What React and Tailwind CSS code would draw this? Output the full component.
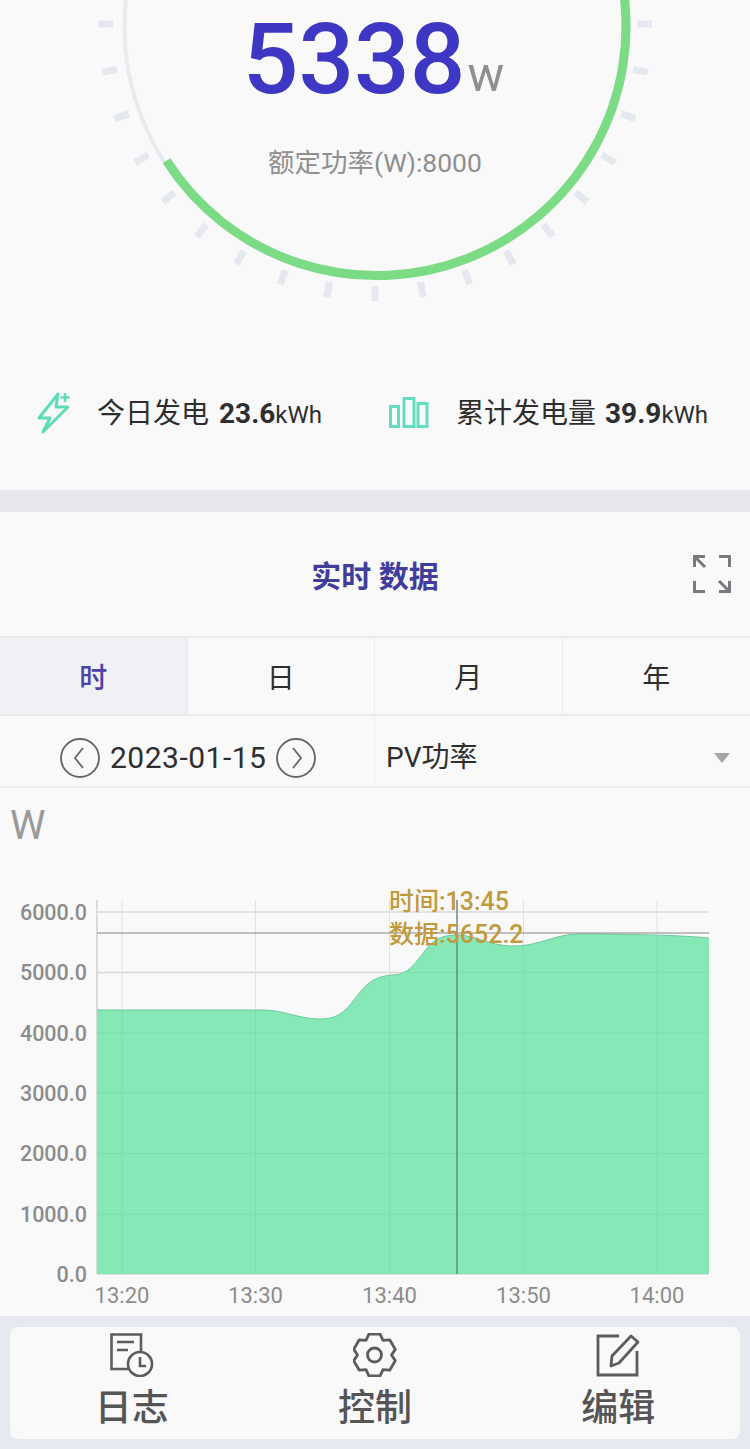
import React from 'react';

const ticks = Array.from({ length: 19 }, (_, i) => i * 10);
const yLabels = [
  ['6000.0', 912],
  ['5000.0', 972.5],
  ['4000.0', 1033],
  ['3000.0', 1093],
  ['2000.0', 1153.5],
  ['1000.0', 1214],
  ['0.0', 1274],
];
const xLabels = [
  ['13:20', 122],
  ['13:30', 255.5],
  ['13:40', 389.5],
  ['13:50', 523.5],
  ['14:00', 657],
];
const curve =
  'M97 1010 L262 1010 C285 1010 298 1019 320 1019 C345 1019 350 1003 362 990 C372 978 382 976 392 975 C412 975 418 957 430 945 C438 937 446 935 457 935 C475 935 488 945 510 946 C540 947 552 934 580 934 C620 934 680 935 709 938';
const areaPath = curve + ' L709 1274 L97 1274 Z';

const gearPath = (() => {
  const cx = 21.5;
  const cy = 22;
  const steps = [
    [-30, 17],
    [-15, 21.5],
    [15, 21.5],
  ];
  let d = '';
  for (let t = 0; t < 6; t++) {
    steps.forEach(([a, r]) => {
      const rad = ((t * 60 + a - 90) * Math.PI) / 180;
      const x = (cx + r * Math.cos(rad)).toFixed(1);
      const y = (cy + r * Math.sin(rad)).toFixed(1);
      d += `${d ? 'L' : 'M'}${x} ${y} `;
    });
  }
  return d + 'Z';
})();

const Gauge = () => (
  <svg className="absolute left-0 top-0" width="750" height="370" viewBox="0 0 750 370">
    {ticks.map((a) => (
      <line
        key={a}
        x1={375 + 262 * Math.cos((a * Math.PI) / 180)}
        y1={24 + 262 * Math.sin((a * Math.PI) / 180)}
        x2={375 + 277 * Math.cos((a * Math.PI) / 180)}
        y2={24 + 277 * Math.sin((a * Math.PI) / 180)}
        stroke="#e5e8ee"
        strokeWidth="7"
      />
    ))}
    <circle cx="376.5" cy="26" r="252" fill="none" stroke="#e9ebef" strokeWidth="4" />
    <path d="M166.5 160.8 A249.5 249.5 0 0 0 622.2 -17.3" fill="none" stroke="#7bdc85" strokeWidth="9" />
  </svg>
);

const BoltIcon = () => (
  <svg width="36" height="46" viewBox="0 0 36 46" fill="none" stroke="#5ddcb8" strokeWidth="3">
    <path d="M22 4 L3 28 L14 28 L7 42 L32 17 L20 17 Z" strokeLinejoin="round" />
    <path d="M29 3 V12 M24.5 7.5 H33.5" strokeWidth="2.5" />
  </svg>
);

const BarsIcon = () => (
  <svg width="40" height="31" viewBox="0 0 40 31" fill="none" stroke="#63dcc0" strokeWidth="3">
    <rect x="1.5" y="9.5" width="8" height="20" />
    <rect x="15" y="1.5" width="10" height="28" />
    <rect x="29" y="6.5" width="9" height="23" />
  </svg>
);

const ExpandIcon = () => (
  <svg width="38" height="38" viewBox="0 0 38 38" fill="none" stroke="#77797d" strokeWidth="3">
    <path d="M1.5 12 V1.5 H12" />
    <path d="M2 2 L12 12" />
    <path d="M26 1.5 H36.5 V12" />
    <path d="M1.5 26 V36.5 H12" />
    <path d="M26 36.5 H36.5 V26" />
    <path d="M36 36 L26 26" />
  </svg>
);

const RoundArrow = ({ dir }) => (
  <svg width="40" height="40" viewBox="0 0 40 40" fill="none" stroke="#666" strokeWidth="1.8">
    <circle cx="20" cy="20" r="19" />
    <path d={dir === 'left' ? 'M23 10 L15 20 L23 30' : 'M17 10 L25 20 L17 30'} />
  </svg>
);

const LogIcon = () => (
  <svg width="44" height="44" viewBox="0 0 44 44" fill="none" stroke="#5c5c5c" strokeWidth="2.6">
    <path d="M18 36 H1.5 V1.5 H31 V18" />
    <path d="M7 9 H24 M7 17 H18" />
    <circle cx="30" cy="31" r="12" />
    <path d="M30 24 V33 H36" />
  </svg>
);

const GearIcon = () => (
  <svg width="44" height="44" viewBox="0 0 44 44" fill="none" stroke="#5c5c5c" strokeWidth="2.8">
    <path d={gearPath} strokeLinejoin="round" />
    <circle cx="21.5" cy="22" r="7" />
  </svg>
);

const EditIcon = () => (
  <svg width="44" height="44" viewBox="0 0 44 44" fill="none" stroke="#5c5c5c" strokeWidth="2.8">
    <path d="M23 3 H2 V42 H41 V18" />
    <path d="M15 33 L16 23 L35 3 L42 9 L23 30 Z" strokeLinejoin="round" />
  </svg>
);

const Chart = () => (
  <svg width="750" height="436" viewBox="0 880 750 436">
    <defs>
      <clipPath id="areaClip">
        <path d={areaPath} />
      </clipPath>
    </defs>
    {yLabels.map(([label, y]) => (
      <line key={label} x1="97" x2="709" y1={y} y2={y} stroke="#d8d8d8" strokeWidth="1.5" />
    ))}
    {xLabels.map(([label, x]) => (
      <line key={label} x1={x} x2={x} y1="900" y2="1274" stroke="#e2e2e2" strokeWidth="1" />
    ))}
    <line x1="97" x2="97" y1="900" y2="1274" stroke="#d0d0d0" strokeWidth="1.5" />
    <path d={areaPath} fill="#86e9b5" />
    <path d={curve} fill="none" stroke="#6fc9a0" strokeWidth="1" />
    <g clipPath="url(#areaClip)">
      {yLabels.map(([label, y]) => (
        <line key={label} x1="97" x2="709" y1={y} y2={y} stroke="#7be0ab" strokeWidth="1" />
      ))}
      {xLabels.map(([label, x]) => (
        <line key={label} x1={x} x2={x} y1="900" y2="1274" stroke="#7be0ab" strokeWidth="1" />
      ))}
    </g>
    <line x1="97" x2="709" y1="933" y2="933" stroke="#868686" strokeWidth="1.2" />
    <line x1="457" x2="457" y1="900" y2="1274" stroke="#62857f" strokeWidth="1.4" />
    {yLabels.map(([label, y]) => (
      <text key={label} x="87" y={y + 7.5} textAnchor="end" fontSize="21.5" fontWeight="500" fill="#8c8c8c">
        {label}
      </text>
    ))}
    {xLabels.map(([label, x]) => (
      <text key={label} x={x} y="1303" textAnchor="middle" fontSize="22" fill="#8c8c8c">
        {label}
      </text>
    ))}
    <text x="389" y="910" fontSize="25" fontWeight="500" fill="#c09a3c">时间:13:45</text>
    <text x="389" y="943" fontSize="25" fontWeight="500" fill="#c09a3c">数据:5652.2</text>
  </svg>
);

const App = () => {
  return (
    <div className="w-[750px] h-[1449px] overflow-hidden bg-[#f9f9fa] font-['Roboto','Noto_Sans_CJK_SC',sans-serif] text-[#2e2e2e]">
      <div className="relative h-[370px] flex flex-col items-center">
        <Gauge />
        <div className="relative flex items-end pt-[5px] pr-[3px]">
          <span className="text-[98px] leading-[110px] font-medium text-[#3d37c4]">5338</span>
          <span className="ml-[2px] text-[49px] leading-[42px] mb-[19px] text-[#8f8f8f]">w</span>
        </div>
        <div className="relative mt-[32px] text-[26.5px] leading-[32px] text-[#8f8f8f]">额定功率(W):8000</div>
      </div>

      <div className="h-[120px] flex items-start pt-[20px] pl-[36px]">
        <BoltIcon />
        <div className="ml-[25px] mt-[6px] flex items-baseline text-[28px] leading-[36px]">
          今日发电<span className="ml-[10px] font-bold">23.6</span>
          <span className="text-[24px]">kWh</span>
        </div>
        <div className="ml-[67px] mt-[7px]"><BarsIcon /></div>
        <div className="ml-[27px] mt-[6px] flex items-baseline text-[28px] leading-[36px]">
          累计发电量<span className="ml-[9px] font-bold">39.9</span>
          <span className="text-[24px]">kWh</span>
        </div>
      </div>

      <div className="h-[22px] bg-[#e6e8ed]" />

      <div className="relative h-[124px] flex items-center justify-center pt-[5px]">
        <span className="text-[30px] font-bold text-[#413d9c]">实时 数据</span>
        <div className="absolute right-[19px] top-[43px]"><ExpandIcon /></div>
      </div>

      <div className="h-[80px] grid grid-cols-4 border-y-2 border-[#e8e9ec] text-[28px]">
        <div className="flex items-center justify-center pt-[6px] bg-[#f0f1f4] text-[#4a42a8] font-medium border-r border-[#e8e9ec]">时</div>
        <div className="flex items-center justify-center pt-[6px] border-r border-[#ececef]">日</div>
        <div className="flex items-center justify-center pt-[6px] border-r border-[#ececef]">月</div>
        <div className="flex items-center justify-center pt-[6px]">年</div>
      </div>

      <div className="h-[72px] flex border-b-2 border-[#eeeef0]">
        <div className="w-[375px] flex items-center pt-[13px] pl-[60px] border-r border-[#eeeef0]">
          <RoundArrow dir="left" />
          <span className="mx-[10px] text-[30px] tracking-[0.5px] leading-none">2023-01-15</span>
          <RoundArrow dir="right" />
        </div>
        <div className="flex-1 flex items-center justify-between pt-[14px] pl-[11px] pr-[20px] text-[28px]">
          <span>PV功率</span>
          <span className="w-0 h-0 border-x-[8px] border-t-[10px] border-x-transparent border-t-[#a5a5a5]" />
        </div>
      </div>

      <div className="h-[92px] pl-[10px] pt-[14px] text-[40px] leading-[48px] text-[#9a9a9a]">W</div>
      <Chart />

      <div className="h-[133px] bg-[#e6e9ef] px-[10px] pt-[11px]">
        <div className="h-[112px] rounded-lg bg-[#f9f9fa] grid grid-cols-3 pt-[6px] text-[#555555]">
          <div className="flex flex-col items-center">
            <LogIcon />
            <span className="mt-[7px] text-[37px] leading-[50px] font-medium">日志</span>
          </div>
          <div className="flex flex-col items-center">
            <GearIcon />
            <span className="mt-[7px] text-[37px] leading-[50px] font-medium">控制</span>
          </div>
          <div className="flex flex-col items-center">
            <EditIcon />
            <span className="mt-[7px] text-[37px] leading-[50px] font-medium">编辑</span>
          </div>
        </div>
      </div>
    </div>
  );
};

export default App;
